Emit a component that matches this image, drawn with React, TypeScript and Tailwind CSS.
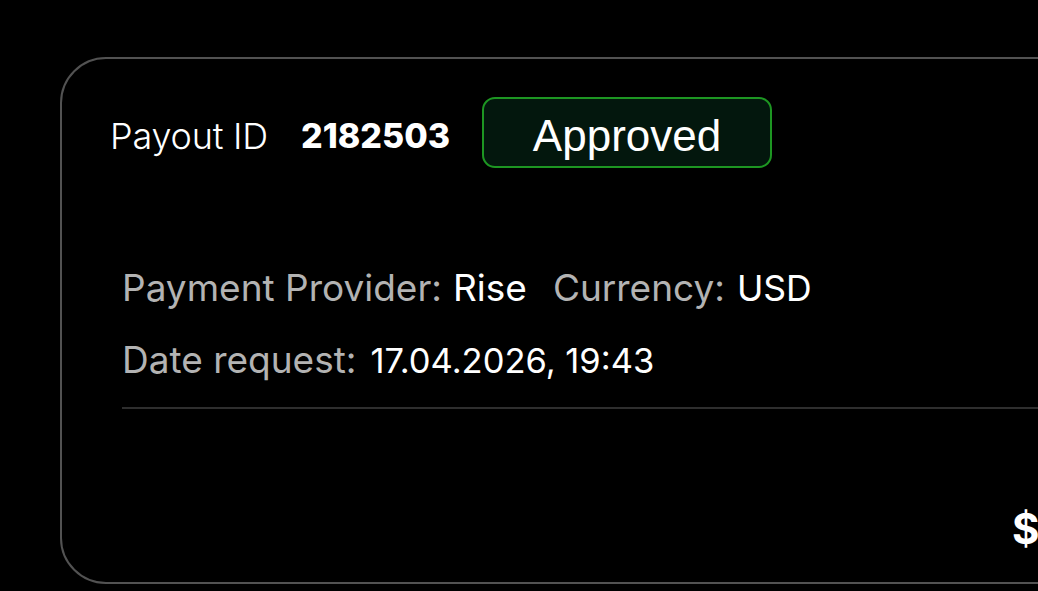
import React from "react";

export default function App() {
  return (
    <div className="w-[1038px] h-[591px] bg-black overflow-hidden pt-[57px] pl-[60px]" style={{ fontFamily: "Inter, 'Noto Sans', sans-serif" }}>
      <div className="w-[1100px] h-[527px] border-2 border-[#525252] rounded-[46px] bg-black pt-[38px] pl-[48px] flex flex-col">
        <div className="flex items-start h-[71px]">
          <span className="mt-[21px] text-[36px] font-light text-white leading-none tracking-[-0.2px]">Payout ID</span>
          <span className="mt-[22px] ml-[33px] text-[34px] font-extrabold text-white leading-none">2182503</span>
          <span className="ml-[32px] h-[71px] w-[290px] flex items-center justify-center pt-[6px] rounded-[13px] border-2 border-[#1d9622] bg-[#03170d] text-white text-[44px] leading-none" style={{ fontFamily: "'Liberation Sans', Arial, sans-serif" }}>
            Approved
          </span>
        </div>
        <div className="pl-[12px] mt-[101px] flex flex-col">
          <div className="flex items-baseline h-[40px] text-[37px] leading-none">
            <span className="text-[#b3b3b3]">Payment Provider:</span>
            <span className="ml-[11px] text-white">Rise</span>
            <span className="ml-[26px] text-[#b3b3b3]">Currency:</span>
            <span className="ml-[12px] text-white text-[35.5px]">USD</span>
          </div>
          <div className="flex items-baseline mt-[32px] h-[40px] text-[37px] leading-none">
            <span className="text-[#b3b3b3]">Date request:</span>
            <span className="ml-[14px] text-white text-[34.5px]">17.04.2026, 19:43</span>
          </div>
          <div className="mt-[26px] h-[2px] bg-[#2e2e2e]" />
          <div className="mt-[99px] pl-[890px] text-white text-[42px] font-bold leading-none">$</div>
        </div>
      </div>
    </div>
  );
}
